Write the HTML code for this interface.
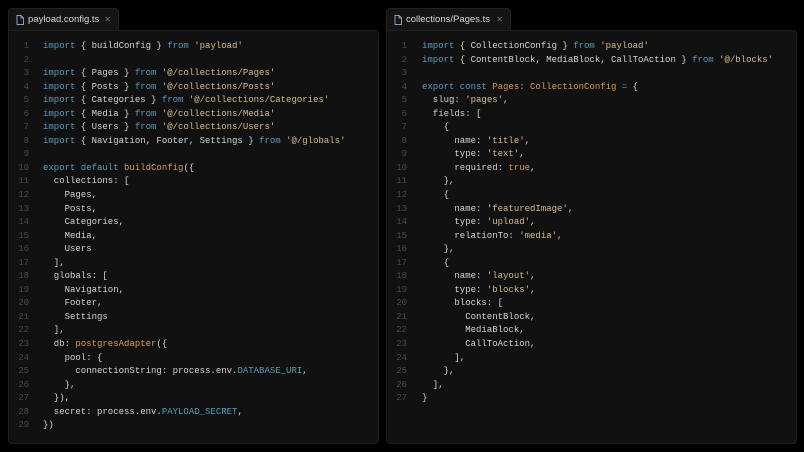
<!DOCTYPE html>
<html><head><style>
body{margin:0;width:804px;height:452px;background:#000;position:relative;overflow:hidden;font-family:"Liberation Mono",monospace}
.tab{position:absolute;top:8px;height:22px;background:#141414;border:1px solid #222;border-bottom:none;border-radius:4px 4px 0 0;box-sizing:border-box;font-family:"Liberation Sans",sans-serif;font-size:9.5px;color:#d8d8d8;line-height:21px}
.tab svg{position:absolute;left:7px;top:6px}
.tab .t{position:absolute;left:19px}
.tab .x{position:absolute;right:7px;color:#777;font-size:8px}
.panel{position:absolute;top:30px;bottom:8px;background:#111;border:1px solid #1e1e1e;border-radius:0 4px 4px 4px;box-sizing:border-box}
pre{position:absolute;margin:0;font-family:"Liberation Mono",monospace;font-size:9px;line-height:13.54px;color:#d4d4d4;white-space:pre}
.n{color:#4a4a4a;text-align:right}
.k{color:#5b9cbb}.s{color:#d8bc8e}.f{color:#d99c58}.c{color:#5b9cbb}
</style></head><body>
<div class="tab" style="left:8px;width:111px"><svg width="8" height="10" viewBox="0 0 8 10"><path d="M1 .5h4l2.5 2.5v6.5h-6.5z M5 .5v2.5h2.5" fill="none" stroke="#8aa0b8" stroke-width="1"/></svg><span class="t">payload.config.ts</span><span class="x">✕</span></div>
<div class="tab" style="left:386px;width:125px"><svg width="8" height="10" viewBox="0 0 8 10"><path d="M1 .5h4l2.5 2.5v6.5h-6.5z M5 .5v2.5h2.5" fill="none" stroke="#8aa0b8" stroke-width="1"/></svg><span class="t">collections/Pages.ts</span><span class="x">✕</span></div>
<div class="panel" style="left:8px;width:371px"></div>
<div class="panel" style="left:386px;width:411px"></div>
<pre class="n" style="left:14px;top:40px;width:15px">1
2
3
4
5
6
7
8
9
10
11
12
13
14
15
16
17
18
19
20
21
22
23
24
25
26
27
28
29</pre>
<pre style="left:43px;top:40px"><span class="k">import</span> { buildConfig } <span class="k">from</span> <span class="s">'payload'</span>

<span class="k">import</span> { Pages } <span class="k">from</span> <span class="s">'@/collections/Pages'</span>
<span class="k">import</span> { Posts } <span class="k">from</span> <span class="s">'@/collections/Posts'</span>
<span class="k">import</span> { Categories } <span class="k">from</span> <span class="s">'@/collections/Categories'</span>
<span class="k">import</span> { Media } <span class="k">from</span> <span class="s">'@/collections/Media'</span>
<span class="k">import</span> { Users } <span class="k">from</span> <span class="s">'@/collections/Users'</span>
<span class="k">import</span> { Navigation, Footer, Settings } <span class="k">from</span> <span class="s">'@/globals'</span>

<span class="k">export default</span> <span class="f">buildConfig</span>({
  collections: [
    Pages,
    Posts,
    Categories,
    Media,
    Users
  ],
  globals: [
    Navigation,
    Footer,
    Settings
  ],
  db: <span class="f">postgresAdapter</span>({
    pool: {
      connectionString: process.env.<span class="c">DATABASE_URI</span>,
    },
  }),
  secret: process.env.<span class="c">PAYLOAD_SECRET</span>,
})</pre>
<pre class="n" style="left:392px;top:40px;width:15px">1
2
3
4
5
6
7
8
9
10
11
12
13
14
15
16
17
18
19
20
21
22
23
24
25
26
27</pre>
<pre style="left:422px;top:40px"><span class="k">import</span> { CollectionConfig } <span class="k">from</span> <span class="s">'payload'</span>
<span class="k">import</span> { ContentBlock, MediaBlock, CallToAction } <span class="k">from</span> <span class="s">'@/blocks'</span>

<span class="k">export const</span> <span class="f">Pages: CollectionConfig</span> <span class="k">=</span> {
  slug: <span class="s">'pages'</span>,
  fields: [
    {
      name: <span class="s">'title'</span>,
      type: <span class="s">'text'</span>,
      required: <span class="f">true</span>,
    },
    {
      name: <span class="s">'featuredImage'</span>,
      type: <span class="s">'upload'</span>,
      relationTo: <span class="s">'media'</span>,
    },
    {
      name: <span class="s">'layout'</span>,
      type: <span class="s">'blocks'</span>,
      blocks: [
        ContentBlock,
        MediaBlock,
        CallToAction,
      ],
    },
  ],
}</pre>
</body></html>
